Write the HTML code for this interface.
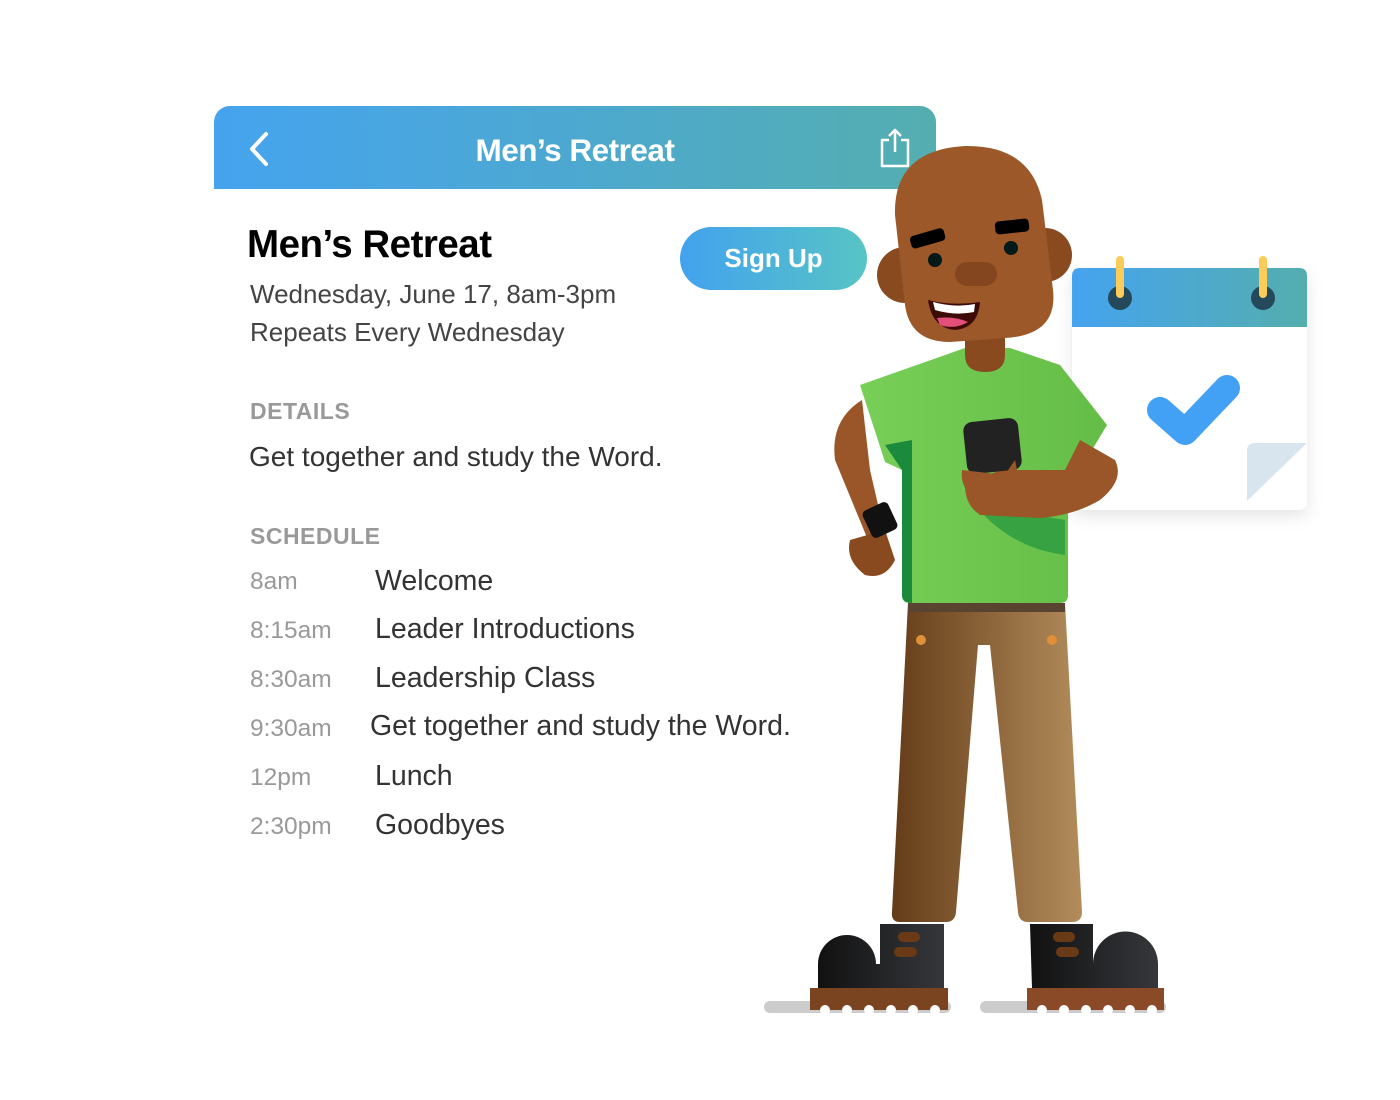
<!DOCTYPE html>
<html><head><meta charset="utf-8"><style>
body{margin:0;width:1400px;height:1100px;background:#fff;position:relative;overflow:hidden;font-family:"Liberation Sans",sans-serif}
.hdr{position:absolute;left:214px;top:106px;width:722px;height:83px;border-radius:16px 16px 0 0;background:linear-gradient(90deg,#45a3ef,#54aeb0)}
.hdr .t{position:absolute;left:0;right:0;top:26px;text-align:center;color:#fff;font-size:31.5px;font-weight:bold;letter-spacing:-0.5px}
.a{position:absolute;white-space:nowrap}
.btn{position:absolute;left:680px;top:227px;width:187px;height:63px;border-radius:32px;background:linear-gradient(90deg,#43a2ee,#57c4c5);color:#fff;font-weight:bold;font-size:26px;text-align:center;line-height:63px}
.tm{color:#999;font-size:24.5px}
.ev{color:#333;font-size:28.5px}
.lb{color:#999;font-size:23px;font-weight:bold;letter-spacing:0.5px}
</style></head><body>
<div class="hdr"><div class="t">Men’s Retreat</div>
<svg style="position:absolute;left:30px;top:24px" width="30" height="40"><path d="M22 4 L8 19 L22 34" stroke="#fff" stroke-width="4" fill="none" stroke-linecap="round" stroke-linejoin="round"/></svg>
<svg style="position:absolute;left:664px;top:20px" width="36" height="44"><path d="M11 14 H4 V40 H30 V14 H23 M17 4 V26 M11 10 L17 4 L23 10" stroke="#fff" stroke-width="2.5" fill="none" stroke-linejoin="round"/></svg>
</div>
<div class="a" style="left:247px;top:223px;font-size:38.5px;font-weight:bold;color:#000;letter-spacing:-0.5px">Men’s Retreat</div>
<div class="a" style="left:250px;top:279px;font-size:26px;color:#444">Wednesday, June 17, 8am-3pm</div>
<div class="a" style="left:250px;top:317px;font-size:26px;color:#444">Repeats Every Wednesday</div>
<div class="btn">Sign Up</div>
<div class="a lb" style="left:250px;top:398px">DETAILS</div>
<div class="a" style="left:249px;top:441px;font-size:28px;color:#333">Get together and study the Word.</div>
<div class="a lb" style="left:250px;top:523px">SCHEDULE</div>
<div class="a tm" style="left:250px;top:568px">8am</div><div class="a ev" style="left:375px;top:565px">Welcome</div>
<div class="a tm" style="left:250px;top:617px">8:15am</div><div class="a ev" style="left:375px;top:613px">Leader Introductions</div>
<div class="a tm" style="left:250px;top:666px">8:30am</div><div class="a ev" style="left:375px;top:662px">Leadership Class</div>
<div class="a tm" style="left:250px;top:715px">9:30am</div><div class="a ev" style="left:370px;top:710px">Get together and study the Word.</div>
<div class="a tm" style="left:250px;top:764px">12pm</div><div class="a ev" style="left:375px;top:760px">Lunch</div>
<div class="a tm" style="left:250px;top:813px">2:30pm</div><div class="a ev" style="left:375px;top:809px">Goodbyes</div>

<svg style="position:absolute;left:0;top:0" width="1400" height="1100">
<defs>
<linearGradient id="cal" x1="0" x2="1"><stop offset="0" stop-color="#45a3ef"/><stop offset="1" stop-color="#54aeae"/></linearGradient>
<linearGradient id="pl" x1="0" x2="1"><stop offset="0" stop-color="#643c18"/><stop offset="1" stop-color="#b38c5c"/></linearGradient>
<linearGradient id="bt" x1="0" x2="1"><stop offset="0" stop-color="#111"/><stop offset="1" stop-color="#35373b"/></linearGradient>
<linearGradient id="sh" x1="0" x2="1"><stop offset="0" stop-color="#78cf58"/><stop offset="1" stop-color="#64bd46"/></linearGradient>
<filter id="ds" x="-20%" y="-20%" width="140%" height="140%"><feDropShadow dx="0" dy="6" stdDeviation="8" flood-color="#000" flood-opacity="0.1"/></filter>
</defs>
<g filter="url(#ds)"><rect x="1072" y="268" width="235" height="242" rx="8" fill="#fff"/></g>
<path d="M1080 268 H1299 Q1307 268 1307 276 V327 H1072 V276 Q1072 268 1080 268Z" fill="url(#cal)"/>
<circle cx="1120" cy="298" r="12" fill="#24495b"/><circle cx="1263" cy="298" r="12" fill="#24495b"/>
<line x1="1120" y1="260" x2="1120" y2="294" stroke="#fdcb58" stroke-width="8" stroke-linecap="round"/>
<line x1="1263" y1="260" x2="1263" y2="294" stroke="#fdcb58" stroke-width="8" stroke-linecap="round"/>
<polyline points="1160,410 1185,432 1227,388" fill="none" stroke="#42a1f5" stroke-width="26" stroke-linecap="round" stroke-linejoin="round"/>
<path d="M1255 443 H1307 L1247 501 V451 Q1247 443 1255 443Z" fill="#d8e5ef"/>
<line x1="770" y1="1007" x2="945" y2="1007" stroke="#ccc" stroke-width="12" stroke-linecap="round"/>
<line x1="986" y1="1007" x2="1160" y2="1007" stroke="#ccc" stroke-width="12" stroke-linecap="round"/>
<path d="M908 603 H1065 L1082 912 Q1082 922 1072 922 H1028 Q1019 922 1018 912 L990 645 H978 L956 912 Q955 922 946 922 H900 Q891 922 892 912Z" fill="url(#pl)"/>
<rect x="908" y="603" width="157" height="9" fill="#5a4330"/>
<circle cx="921" cy="640" r="5" fill="#e0903a"/><circle cx="1052" cy="640" r="5" fill="#e0903a"/>
<path d="M880 924 H944 V988 H818 V964 A29 29 0 0 1 876 964 H880Z" fill="url(#bt)"/>
<path d="M1030 924 H1093 V964 A29 29 0 0 1 1158 964 V988 H1032Z" fill="url(#bt)"/>
<rect x="810" y="988" width="138" height="22" fill="#7a4420"/><rect x="1027" y="988" width="137" height="22" fill="#8a4a28"/>
<g fill="#fff"><circle cx="825" cy="1010" r="5"/><circle cx="847" cy="1010" r="5"/><circle cx="869" cy="1010" r="5"/><circle cx="891" cy="1010" r="5"/><circle cx="913" cy="1010" r="5"/><circle cx="935" cy="1010" r="5"/>
<circle cx="1042" cy="1010" r="5"/><circle cx="1064" cy="1010" r="5"/><circle cx="1086" cy="1010" r="5"/><circle cx="1108" cy="1010" r="5"/><circle cx="1130" cy="1010" r="5"/><circle cx="1152" cy="1010" r="5"/></g>
<g stroke="#6a3a16" stroke-width="10" stroke-linecap="round"><line x1="903" y1="937" x2="915" y2="937"/><line x1="899" y1="952" x2="912" y2="952"/><line x1="1058" y1="937" x2="1070" y2="937"/><line x1="1061" y1="952" x2="1074" y2="952"/></g>
<path d="M862 400 Q830 420 835 460 L868 540 L885 535 L870 470 Z" fill="#9a5628"/>
<path d="M850 540 Q845 560 865 575 Q885 580 895 560 L885 530 Z" fill="#8a4a20"/>
<rect x="866" y="505" width="28" height="30" rx="5" transform="rotate(-25 880 520)" fill="#111"/>
<path d="M860 385 L965 348 H1010 L1060 365 L1107 425 L1080 470 L1068 470 V595 Q1068 603 1060 603 H910 Q902 603 902 595 V470 L885 462Z" fill="url(#sh)"/>
<path d="M885 445 L912 440 V603 Q902 603 902 595 V470Z" fill="#1c8a3c"/>
<path d="M975 505 Q1010 548 1065 555 V520 Z" fill="#2a9a40" opacity="0.8"/>
<path d="M965 335 H1005 V355 Q1005 372 985 372 Q965 372 965 355Z" fill="#8a4a20"/>
<path d="M1080 440 L1115 460 Q1125 480 1100 500 Q1075 515 1040 518 L980 515 Q965 505 965 485 L1000 470 L1065 470Z" fill="#9a5628"/>
<rect x="965" y="420" width="55" height="52" rx="9" transform="rotate(-6 992 446)" fill="#222"/>
<path d="M962 470 Q960 490 975 495 L1020 485 L1015 460 Q1008 470 1005 475Z" fill="#9a5628"/>
<circle cx="905" cy="275" r="28" fill="#8a4a20"/><circle cx="1045" cy="255" r="27" fill="#8a4a20"/>
<path d="M895 215 Q893 150 965 146 Q1030 145 1042 200 L1053 290 Q1058 335 1005 338 L950 342 Q910 342 905 305Z" fill="#9d5829"/>
<rect x="910" y="232" width="35" height="13" rx="4" transform="rotate(-16 927 238)" fill="#000"/>
<rect x="995" y="220" width="34" height="13" rx="4" transform="rotate(-6 1012 226)" fill="#000"/>
<circle cx="935" cy="260" r="7" fill="#02191a"/><circle cx="1011" cy="248" r="7" fill="#02191a"/>
<rect x="955" y="262" width="42" height="24" rx="12" fill="#84461e"/>
<path d="M928 300 Q950 306 980 302 Q978 328 955 330 Q932 328 928 300Z" fill="#3d0c08"/>
<path d="M933 302 Q955 308 975 304 L974 312 Q955 316 935 310Z" fill="#fff"/>
<path d="M937 318 Q955 316 968 322 Q955 330 940 325Z" fill="#e14f7a"/>
</svg>
</body></html>
